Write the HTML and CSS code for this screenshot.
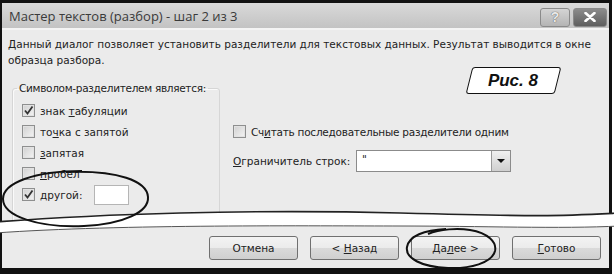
FILE: index.html
```html
<!DOCTYPE html>
<html lang="ru">
<head>
    <meta charset="UTF-8">
    <title>Мастер текстов (разбор) - шаг 2 из 3</title>
    <link rel="stylesheet" href="styles.css">
</head>
<body>
    <div class="figure">
        <div class="window-top">
            <div class="titlebar">
                <span class="title">Мастер текстов (разбор) - шаг 2 из 3</span>
                <div class="title-buttons">
                    <span class="tbtn tbtn-help">?</span>
                    <span class="tbtn tbtn-close">
                        <svg width="12" height="10" viewBox="0 0 12 10"><path d="M1.5 1 L10.5 9 M10.5 1 L1.5 9" stroke="#fff" stroke-width="2.6" stroke-linecap="round"/></svg>
                    </span>
                </div>
            </div>

            <div class="dialog-body">
                <p class="intro">Данный диалог позволяет установить разделители для текстовых данных. Результат выводится в окне<br>образца разбора.</p>

                <div class="columns">
                    <fieldset class="group">
                        <legend>Символом-разделителем является:</legend>
                        <label class="check-row"><span class="box checked"><svg width="11" height="11" viewBox="0 0 11 11"><path d="M2 5.5 L4.5 8.5 L9.5 1.5" fill="none" stroke="#333" stroke-width="1.8"/></svg></span><span>знак <u>т</u>абуляции</span></label>
                        <label class="check-row"><span class="box"></span><span>то<u>ч</u>ка с запятой</span></label>
                        <label class="check-row"><span class="box"></span><span><u>з</u>апятая</span></label>
                        <label class="check-row"><span class="box"></span><span><u>п</u>робел</span></label>
                        <label class="check-row"><span class="box checked"><svg width="11" height="11" viewBox="0 0 11 11"><path d="M2 5.5 L4.5 8.5 L9.5 1.5" fill="none" stroke="#333" stroke-width="1.8"/></svg></span><span class="other-label"><u>д</u>ругой:</span><span class="text-input"></span></label>
                    </fieldset>

                    <div class="options">
                        <label class="check-row"><span class="box"></span><span class="tight">Сч<u>и</u>тать последовательные разделители одним</span></label>
                        <div class="combo-row">
                            <span class="combo-label"><u>О</u>граничитель строк:</span>
                            <span class="combo">
                                <span class="combo-value">"</span>
                                <span class="combo-arrow"></span>
                            </span>
                        </div>
                    </div>
                </div>
            </div>
        </div>

        <div class="window-bottom">
            <button class="btn">Отмена</button>
            <button class="btn">&lt; <u>Н</u>азад</button>
            <button class="btn">Да<u>л</u>ее &gt;</button>
            <button class="btn"><u>Г</u>отово</button>
        </div>

        <!-- разрыв страницы -->
        <svg class="tear" width="614" height="274" viewBox="0 0 614 274">
            <path d="M-5 222 C100 214 250 209 400 213 S560 216 620 213 L620 226 C560 229 480 226 400 226 S120 224 -5 233 Z" fill="#fff"/>
            <path d="M-5 222 C100 214 250 209 400 213 S560 216 620 213" fill="none" stroke="#222" stroke-width="1.6"/>
            <path d="M620 226 C560 229 480 226 400 226 S120 224 -5 233" fill="none" stroke="#555" stroke-width="1"/>
        </svg>

        <div class="fig-label"><span>Рис. 8</span></div>

        <!-- пометки от руки -->
        <svg class="marks" width="614" height="274" viewBox="0 0 614 274">
            <path d="M82 171 C34 171 3 183 3 199 C3 216 38 228 84 226 C124 224 149 212 148 197 C147 181 118 170 66 172" fill="none" stroke="#111" stroke-width="2"/>
            <path d="M428 234 C440 229 458 228 470 230 C488 233 497 242 495 251 C492 263 470 269 448 268 C421 267 405 258 407 247 C409 236 424 230 446 229" fill="none" stroke="#111" stroke-width="2"/>
        </svg>
    </div>
</body>
</html>
```

FILE: styles.css
```css
* {
    box-sizing: border-box;
}

body {
    margin: 0;
    background: #fff;
    font-family: "DejaVu Sans", Tahoma, sans-serif;
    font-size: 10.5px;
    color: #222;
}

.figure {
    position: relative;
    width: 614px;
    height: 274px;
    overflow: hidden;
}

/* верхняя часть окна */
.window-top {
    width: 612px;
    height: 226px;
    border: solid #111;
    border-width: 3px 3px 0 2px;
    background: #ebebeb;
    overflow: hidden;
}

.titlebar {
    height: 27px;
    display: flex;
    align-items: center;
    justify-content: space-between;
    padding: 0 2px 0 7px;
    background: linear-gradient(#d9d9d9, #c3c3c3);
    border-bottom: 2px solid #f4f4f4;
}

.title {
    font-family: "Open Sans", sans-serif;
    font-size: 13px;
    color: #3a3a3a;
}

.title-buttons {
    display: flex;
    gap: 3px;
    margin-top: 3px;
}

.tbtn {
    height: 19px;
    display: flex;
    align-items: center;
    justify-content: center;
    border: 1px solid #8a8a8a;
    border-radius: 3px;
}

.tbtn-help {
    width: 30px;
    background: linear-gradient(#d4d4d4, #b4b4b4);
    font-family: "Liberation Sans", sans-serif;
    font-weight: bold;
    font-size: 14px;
    color: #e8e8e8;
    text-shadow: 0 0 1px #666, 0 0 1px #666;
}

.tbtn-close {
    width: 34px;
    background: linear-gradient(#8c8c8c, #5e5e5e);
}

.dialog-body {
    padding: 6px 8px 0 6px;
}

.intro {
    margin: 0;
    line-height: 16px;
}

.columns {
    display: flex;
    margin-top: 12px;
}

.group {
    width: 208px;
    height: 160px;
    margin: 0 0 0 4px;
    padding: 4px 0 0 9px;
    border: 1px solid #d6d6d6;
    border-radius: 3px;
    box-shadow: inset 1px 1px 0 #fafafa;
}

.group legend {
    padding: 0 2px;
    margin-left: -5px;
    line-height: 16px;
    letter-spacing: -0.3px;
}

.check-row {
    height: 21px;
    display: flex;
    align-items: center;
    gap: 5px;
    white-space: nowrap;
}

.tight {
    letter-spacing: -0.25px;
}

.box {
    width: 13px;
    height: 13px;
    flex: none;
    display: flex;
    align-items: center;
    justify-content: center;
    border: 1px solid #8e8f8f;
    background: linear-gradient(135deg, #d0d0d0, #f4f4f4);
    box-shadow: inset 0 0 0 1px #e2e2e2;
}

.other-label {
    width: 49px;
}

.text-input {
    width: 35px;
    height: 20px;
    background: #fff;
    border: 1px solid #b5b5b5;
}

.options {
    margin-left: 13px;
    padding-top: 41px;
}

.combo-row {
    display: flex;
    align-items: center;
    margin-top: 8px;
}

.combo-label {
    width: 123px;
}

.combo {
    width: 155px;
    height: 22px;
    display: flex;
    justify-content: space-between;
    background: #fff;
    border: 1px solid #8b8b8b;
}

.combo-value {
    padding: 2px 0 0 5px;
}

.combo-arrow {
    width: 19px;
    position: relative;
    background: linear-gradient(#f0f0f0, #cfcfcf);
    border-left: 1px solid #9a9a9a;
}

.combo-arrow::after {
    content: "";
    position: absolute;
    left: 5px;
    top: 8px;
    border: 4px solid transparent;
    border-top: 4px solid #111;
}

/* нижняя часть окна */
.window-bottom {
    width: 612px;
    height: 48px;
    display: flex;
    justify-content: flex-end;
    align-items: flex-start;
    gap: 12px;
    padding: 10px 8px 0 0;
    background: #ebebeb;
    border: solid #111;
    border-width: 0 3px 6px 2px;
}

.btn {
    width: 89px;
    height: 24px;
    padding: 0;
    font-family: "DejaVu Sans", Tahoma, sans-serif;
    font-size: 10.5px;
    color: #222;
    border: 1px solid #707070;
    border-radius: 3px;
    background: linear-gradient(#f3f3f3 0%, #ebebeb 50%, #dadada 51%, #cfcfcf 100%);
}

.tear,
.marks {
    position: absolute;
    top: 0;
    left: 0;
    pointer-events: none;
}

.fig-label {
    position: absolute;
    left: 469px;
    top: 67px;
    width: 89px;
    height: 27px;
    display: flex;
    align-items: center;
    justify-content: center;
    background: #fff;
    border: 1.5px solid #111;
    border-radius: 3px;
    transform: skewX(-14deg);
}

.fig-label span {
    transform: skewX(14deg);
    font-family: "Liberation Sans", sans-serif;
    font-size: 17px;
    font-weight: bold;
    font-style: italic;
    color: #111;
}
```
